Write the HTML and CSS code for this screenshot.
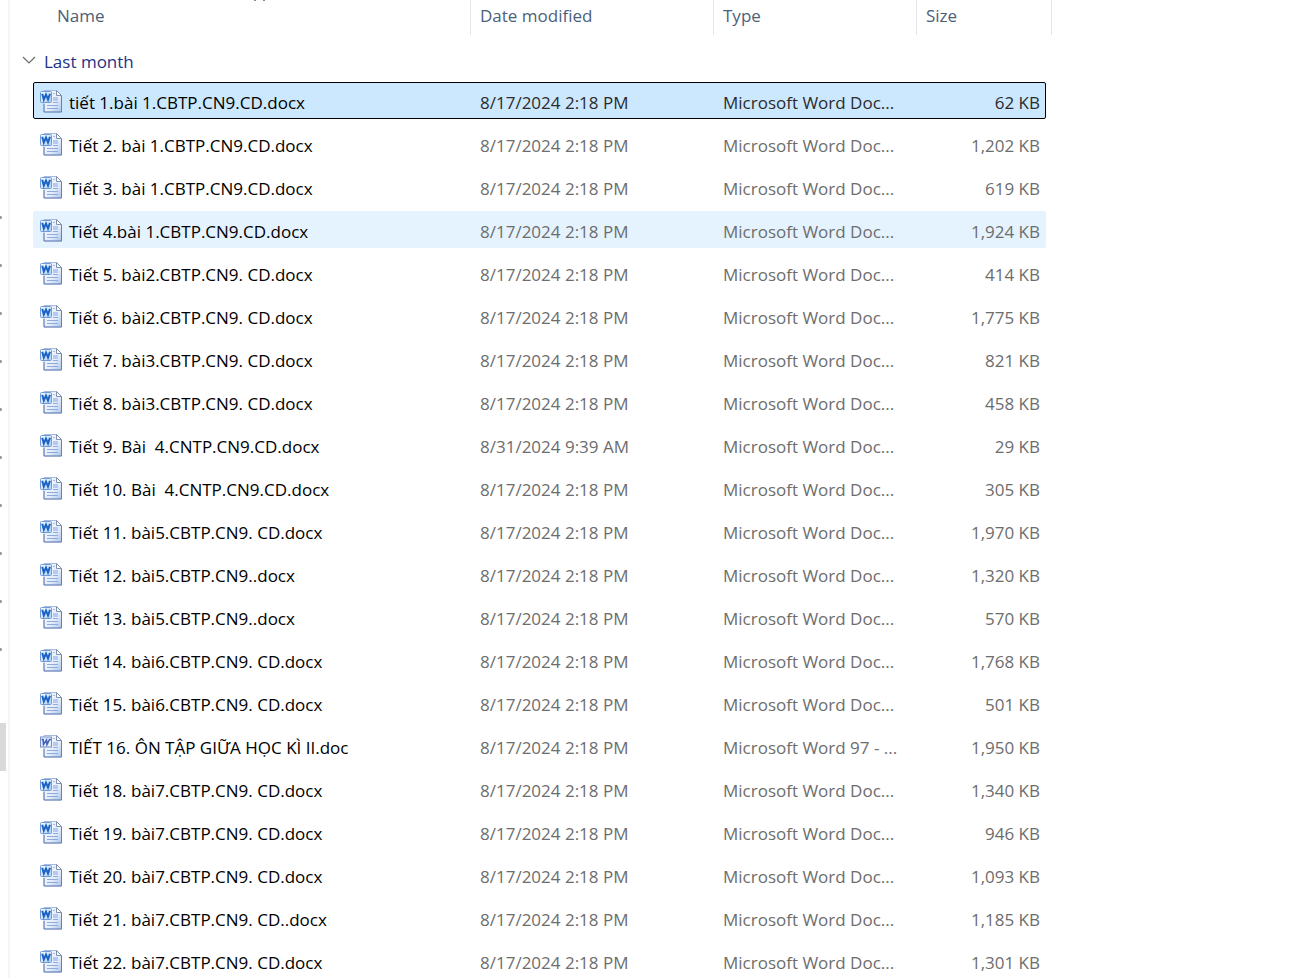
FILE: index.html
```html
<!DOCTYPE html>
<html lang="vi">
<head>
<meta charset="utf-8">
<title>Files</title>
<link rel="stylesheet" href="styles.css">
</head>
<body>
<svg class="defs" aria-hidden="true">
  <defs>
    <linearGradient id="page" x1="0" y1="0" x2="1" y2="1"><stop offset="0" stop-color="#f4f8fe"/><stop offset=".6" stop-color="#e6eefb"/><stop offset="1" stop-color="#a9c2ea"/></linearGradient>
    <linearGradient id="badge" x1="0" y1="0" x2="1" y2="1"><stop offset="0" stop-color="#ffffff"/><stop offset="1" stop-color="#a8cdf5"/></linearGradient>
    <symbol id="sheet" viewBox="0 0 24 24">
      <path d="M5 1.500H17.500L22.500 6.500V23H5Z" fill="url(#page)" stroke="#a9bbdb"/>
      <path d="M22.500 7V23H5V15" fill="none" stroke="#6580b8"/>
      <path d="M17.500 1.500V6.500H22.500Z" fill="#fff" stroke="#8091b0"/>
      <path d="M14 4.500H16" stroke="#a7bde4" fill="none"/>
      <path d="M14 8H19V12H14Z" fill="#b4caf0"/>
      <path d="M8 16.500H19M8 19.500H19M14 13.500H19" stroke="#8fabdc" fill="none"/>
    </symbol>
    <symbol id="docx" viewBox="0 0 24 24">
      <use href="#sheet"/>
      <rect x="1.500" y="2.500" width="11" height="11" rx="1" fill="url(#badge)" stroke="#6f9bd8"/>
      <path d="M3.200 4.800L4.800 10.500L7 5.500L9 10.500L11 4.800" fill="none" stroke="#1a63c4" stroke-width="2"/>
    </symbol>
    <symbol id="doc" viewBox="0 0 24 24">
      <use href="#sheet"/>
      <rect x="1.500" y="3" width="11" height="10" fill="#e8effc" stroke="#7590cc"/>
      <path d="M2.500 5.500H5M4 5.500L4.500 10.500L7.500 6L8 10.500L10.500 5.500H12" fill="none" stroke="#4663b4" stroke-width="1.600"/>
    </symbol>
  </defs>
</svg>
<div class="window">
  <aside class="nav-edge" aria-hidden="true">
    <div class="dots" id="dots"></div>
    <div class="thumb"></div>
  </aside>
  <main class="pane">
    <svg class="clipped" width="16" height="1" aria-hidden="true"><path d="M0 .5H2M9 .5H11" stroke="#8a8a8a"/></svg>
    <table class="files">
      <thead>
        <tr class="head"><th scope="col">Name</th><th scope="col">Date modified</th><th scope="col">Type</th><th scope="col">Size</th></tr>
      </thead>
      <tbody id="rows">
        <tr class="group"><th scope="rowgroup"><button class="toggle" type="button" aria-expanded="true"><svg width="14" height="12" viewBox="0 0 14 12" aria-hidden="true"><path d="M1 1L7 7L13 1" fill="none" stroke="#6b6b6b" stroke-width="1.200"/></svg>Last month</button></th></tr>
      </tbody>
    </table>
  </main>
</div>
<script src="files.js"></script>
</body>
</html>
```
FILE: styles.css
```css
* { box-sizing: border-box; }
body {
  margin: 0;
  height: 100vh;
  overflow: hidden;
  background: #fff;
  font-family: "Open Sans", "Noto Sans", sans-serif;
  font-size: 17px;
  line-height: 24px;
}
.defs { position: absolute; width: 0; height: 0; }
.window { display: flex; height: 100%; }
.nav-edge {
  flex: none;
  width: 10px;
  padding-top: 216px;
  border-right: 2px solid #f5f5f5;
}
.dots { display: flex; flex-direction: column; gap: 45px; }
.dot { width: 2px; height: 3px; border-radius: 0 2px 2px 0; background: #8c9499; }
.thumb { width: 6px; height: 48px; margin-top: 72px; background: #d9d9d9; }
.pane { position: relative; flex: 1; padding-left: 23px; }
.clipped { position: absolute; top: 0; left: 244px; }
.files, .files thead, .files tbody { display: block; }
.files th { font-weight: 400; text-align: left; }
.files th, .files td { padding: 0; white-space: pre; }
.head, .file { display: grid; grid-template-columns: 438px 243px 203px 135px; }
.head { height: 35px; color: #4c607a; }
.head th { padding: 4px 9px; border-right: 1px solid #e5e5e5; }
.head th:first-child { padding-left: 24px; }
.group { display: block; height: 47px; padding-top: 15px; }
.group th { display: block; }
.toggle {
  display: flex;
  align-items: center;
  gap: 8px;
  margin-left: -11px;
  padding: 0;
  border: 0;
  background: none;
  color: #1e3287;
  font: inherit;
}
.file {
  grid-template-columns: 438px 243px 203px 129px;
  align-items: center;
  width: 1013px;
  height: 37px;
  margin-bottom: 6px;
  border: 1px solid transparent;
  border-radius: 2px;
  color: #6d6d6d;
}
.file td { padding-left: 8px; padding-top: 5px; }
.file .name { display: flex; align-items: center; gap: 6px; padding: 0 0 0 5px; color: #000; }
.name svg { flex: none; width: 24px; height: 24px; }
.name span { padding-top: 5px; }
.file .size { padding-right: 7px; text-align: right; }
.hovered { background: #e5f3ff; }
.selected { background: #cce8ff; border-color: #000; color: #2b2b2b; }
```
FILE: files.js
```js
const stamp = "8/17/2024 2:18 PM";
const files = [
  ["tiết 1.bài 1.CBTP.CN9.CD.docx", "62"],
  ["Tiết 2. bài 1.CBTP.CN9.CD.docx", "1,202"],
  ["Tiết 3. bài 1.CBTP.CN9.CD.docx", "619"],
  ["Tiết 4.bài 1.CBTP.CN9.CD.docx", "1,924"],
  ["Tiết 5. bài2.CBTP.CN9. CD.docx", "414"],
  ["Tiết 6. bài2.CBTP.CN9. CD.docx", "1,775"],
  ["Tiết 7. bài3.CBTP.CN9. CD.docx", "821"],
  ["Tiết 8. bài3.CBTP.CN9. CD.docx", "458"],
  ["Tiết 9. Bài  4.CNTP.CN9.CD.docx", "29", "8/31/2024 9:39 AM"],
  ["Tiết 10. Bài  4.CNTP.CN9.CD.docx", "305"],
  ["Tiết 11. bài5.CBTP.CN9. CD.docx", "1,970"],
  ["Tiết 12. bài5.CBTP.CN9..docx", "1,320"],
  ["Tiết 13. bài5.CBTP.CN9..docx", "570"],
  ["Tiết 14. bài6.CBTP.CN9. CD.docx", "1,768"],
  ["Tiết 15. bài6.CBTP.CN9. CD.docx", "501"],
  ["TIẾT 16. ÔN TẬP GIỮA HỌC KÌ II.doc", "1,950"],
  ["Tiết 18. bài7.CBTP.CN9. CD.docx", "1,340"],
  ["Tiết 19. bài7.CBTP.CN9. CD.docx", "946"],
  ["Tiết 20. bài7.CBTP.CN9. CD.docx", "1,093"],
  ["Tiết 21. bài7.CBTP.CN9. CD..docx", "1,185"],
  ["Tiết 22. bài7.CBTP.CN9. CD.docx", "1,301"]
];
const state = { 0: " selected", 3: " hovered" };
document.getElementById("rows").insertAdjacentHTML("beforeend", files.map(([name, size, date], i) => {
  const old = name.endsWith(".doc");
  return `<tr class="file${state[i] || ""}"><td class="name"><svg aria-hidden="true"><use href="#${old ? "doc" : "docx"}"/></svg><span>${name}</span></td><td>${date || stamp}</td><td>${old ? "Microsoft Word 97 - ..." : "Microsoft Word Doc..."}</td><td class="size">${size} KB</td></tr>`;
}).join(""));
document.getElementById("dots").innerHTML = '<div class="dot"></div>'.repeat(10);
```
